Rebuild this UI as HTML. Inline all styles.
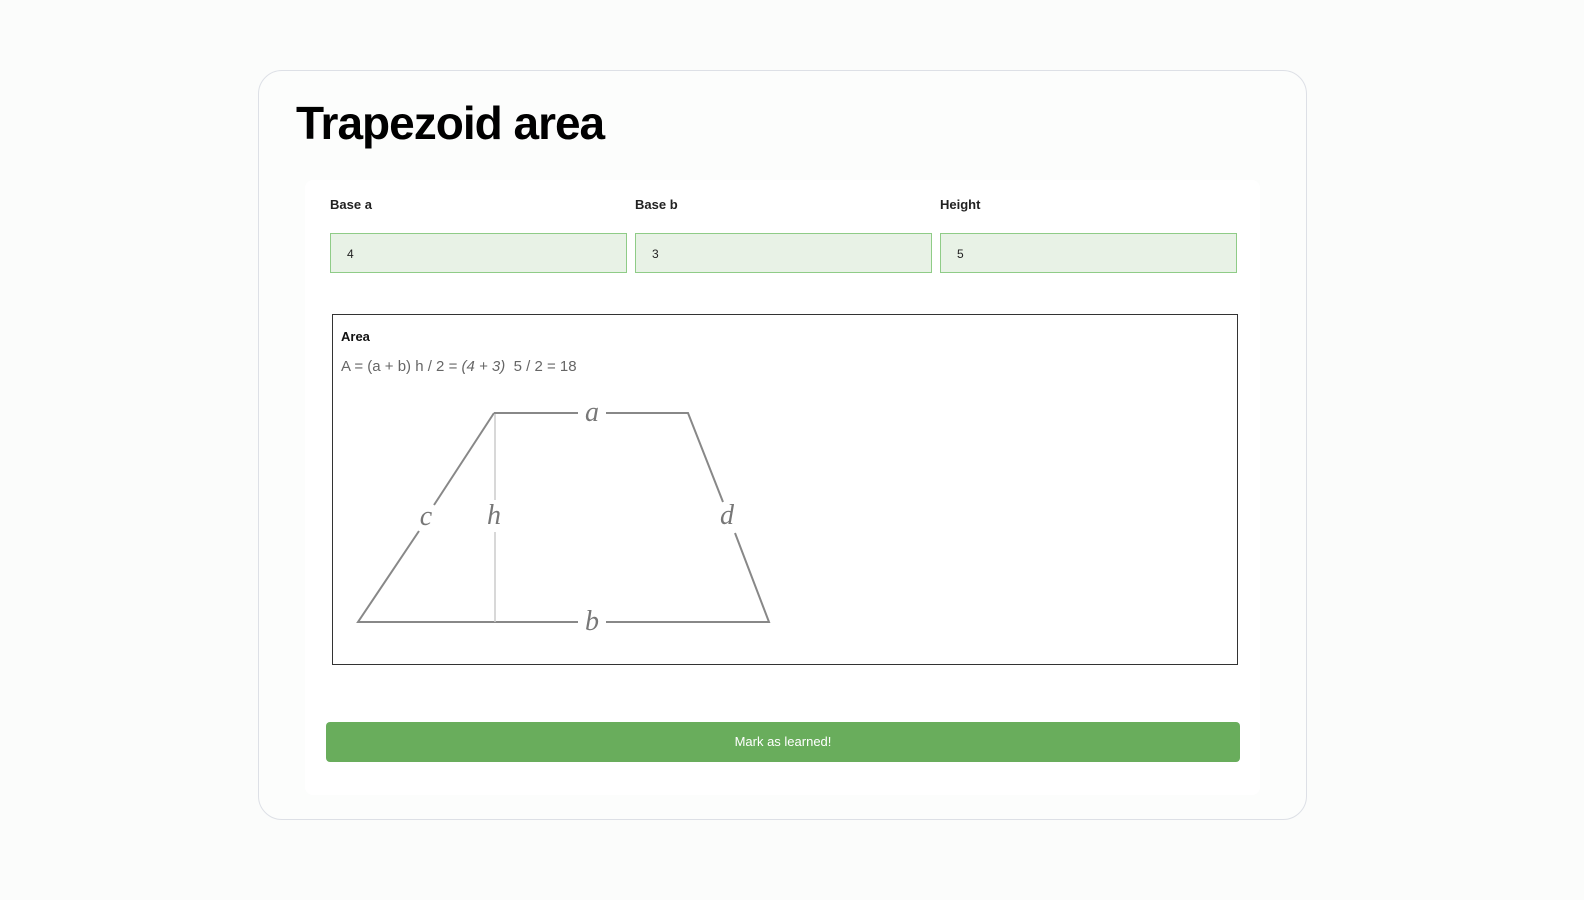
<!DOCTYPE html>
<html><head><style>
body{margin:0;width:1584px;height:900px;background:#fbfcfb;font-family:"Liberation Sans",sans-serif;position:relative;overflow:hidden}
.card{position:absolute;left:258px;top:70px;width:1049px;height:750px;border:1px solid #dde0e6;border-radius:24px;background:#fcfdfc;box-sizing:border-box}
h1{position:absolute;left:296px;top:96px;margin:0;font-size:46px;font-weight:bold;letter-spacing:-1px;color:#000}
.panel{position:absolute;left:305px;top:180px;width:955px;height:615px;background:#fff;border-radius:8px}
.lbl{position:absolute;top:197px;font-size:13px;font-weight:bold;color:#222}
.inp{position:absolute;top:233px;width:297px;height:40px;box-sizing:border-box;background:#e8f2e6;border:1px solid #8fcc87;font-size:12px;padding:13px 0 0 16px;color:#222}
.box{position:absolute;left:332px;top:314px;width:906px;height:351px;border:1px solid #333;box-sizing:border-box;background:#fff}
.btn{position:absolute;left:326px;top:722px;width:914px;height:40px;background:#69ad5c;border-radius:4px;color:#fff;font-size:13px;text-align:center;line-height:40px}
</style></head><body>
<div class="card"></div>
<h1>Trapezoid area</h1>
<div class="panel"></div>
<div class="lbl" style="left:330px">Base a</div>
<div class="lbl" style="left:635px">Base b</div>
<div class="lbl" style="left:940px">Height</div>
<div class="inp" style="left:330px">4</div>
<div class="inp" style="left:635px">3</div>
<div class="inp" style="left:940px">5</div>
<div class="box">
<div style="position:absolute;left:8px;top:14px;font-size:13px;font-weight:bold;color:#111">Area</div>
<div style="position:absolute;left:8px;top:43px;font-size:15px;color:#666">A = (a + b) h / 2 = <i>(4 + 3)</i>&nbsp; 5 / 2 = 18</div>
</div>
<svg style="position:absolute;left:0;top:0" width="1584" height="900">
<g stroke="#888" stroke-width="2" fill="none">
<path d="M494 413H578M606 413H688L723 502M735 533L769 622H606M578 622H358L419 531M434 505L494 413"/>
</g>
<path d="M495 414V500M495 532V622" stroke="#ccc" stroke-width="1.5"/>
<g font-family="Liberation Serif,serif" font-style="italic" font-size="28" fill="#777" text-anchor="middle">
<text x="592" y="421">a</text><text x="592" y="630">b</text><text x="426" y="525">c</text><text x="494" y="524">h</text><text x="727" y="524">d</text>
</g>
</svg>
<div class="btn">Mark as learned!</div>
</body></html>
